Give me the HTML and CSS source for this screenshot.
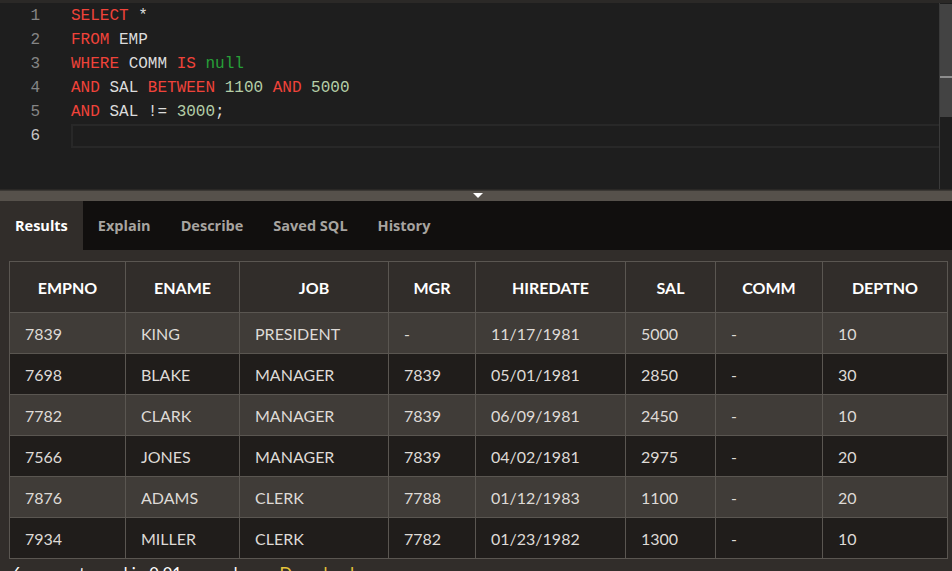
FILE: index.html
```html
<!DOCTYPE html>
<html>
<head>
<meta charset="utf-8">
<link rel="stylesheet" href="styles.css">
</head>
<body>
<div class="topstrip"></div>
<div class="editor">
  <div class="gutter">
    <div class="ln">1</div><div class="ln">2</div><div class="ln">3</div><div class="ln">4</div><div class="ln">5</div><div class="ln cur">6</div>
  </div>
  <div class="code">
    <div class="line"><span class="kw">SELECT</span> <span class="id">*</span></div>
    <div class="line"><span class="kw">FROM</span> <span class="id">EMP</span></div>
    <div class="line"><span class="kw">WHERE</span> <span class="id">COMM</span> <span class="kw">IS</span> <span class="nl">null</span></div>
    <div class="line"><span class="kw">AND</span> <span class="id">SAL</span> <span class="kw">BETWEEN</span> <span class="num">1100</span> <span class="kw">AND</span> <span class="num">5000</span></div>
    <div class="line"><span class="kw">AND</span> <span class="id">SAL</span> <span class="id">!=</span> <span class="num">3000</span><span class="id">;</span></div>
    <div class="line curline"></div>
  </div>
  <div class="vscroll"><div class="thumb"><div class="mark"></div></div></div>
</div>
<div class="splitter"><div class="tri"></div></div>
<div class="tabs">
  <div class="tab active">Results</div>
  <div class="tab">Explain</div>
  <div class="tab">Describe</div>
  <div class="tab">Saved SQL</div>
  <div class="tab">History</div>
</div>
<div class="results">
  <table class="grid">
    <colgroup>
      <col style="width:116px"><col style="width:114px"><col style="width:149px"><col style="width:87px"><col style="width:150px"><col style="width:90px"><col style="width:107px"><col style="width:125px">
    </colgroup>
    <thead>
      <tr><th>EMPNO</th><th>ENAME</th><th>JOB</th><th>MGR</th><th>HIREDATE</th><th>SAL</th><th>COMM</th><th>DEPTNO</th></tr>
    </thead>
    <tbody>
      <tr><td>7839</td><td>KING</td><td>PRESIDENT</td><td>-</td><td>11/17/1981</td><td>5000</td><td>-</td><td>10</td></tr>
      <tr><td>7698</td><td>BLAKE</td><td>MANAGER</td><td>7839</td><td>05/01/1981</td><td>2850</td><td>-</td><td>30</td></tr>
      <tr><td>7782</td><td>CLARK</td><td>MANAGER</td><td>7839</td><td>06/09/1981</td><td>2450</td><td>-</td><td>10</td></tr>
      <tr><td>7566</td><td>JONES</td><td>MANAGER</td><td>7839</td><td>04/02/1981</td><td>2975</td><td>-</td><td>20</td></tr>
      <tr><td>7876</td><td>ADAMS</td><td>CLERK</td><td>7788</td><td>01/12/1983</td><td>1100</td><td>-</td><td>20</td></tr>
      <tr><td>7934</td><td>MILLER</td><td>CLERK</td><td>7782</td><td>01/23/1982</td><td>1300</td><td>-</td><td>10</td></tr>
    </tbody>
  </table>
  <div class="status"><span>6 rows returned in 0.01 seconds</span><span class="dl">Download</span></div>
</div>
</body>
</html>
```
FILE: styles.css
```css
html, body {
  margin: 0;
  padding: 0;
  background: #312d2a;
  overflow: hidden;
  height: 571px;
}
body {
  font-family: Lato, "Open Sans", sans-serif;
}
.topstrip {
  height: 3px;
  background: #2b2927;
}
.editor {
  display: flex;
  height: 186px;
  overflow: hidden;
  background: #1e1e1e;
  border-bottom: 1px solid #2a2826;
}
.gutter {
  width: 40px;
  flex: none;
  padding: 1px 31px 0 0;
  font-family: "Liberation Mono", monospace;
  font-size: 16px;
  color: #858585;
  text-align: right;
}
.ln {
  height: 24px;
  line-height: 24px;
}
.ln.cur {
  color: #c6c6c6;
}
.code {
  flex: 1;
  padding-top: 1px;
  font-family: "Liberation Mono", monospace;
  font-size: 16px;
}
.line {
  height: 24px;
  line-height: 24px;
  white-space: pre;
}
.curline {
  box-sizing: border-box;
  border: 2px solid #282828;
  border-right: none;
}
.kw { color: #f0433a; }
.id { color: #dcdcdc; }
.nl { color: #27a038; }
.num { color: #b5cea8; }
.vscroll {
  width: 12px;
  flex: none;
  border-left: 1px solid #3a3a3a;
  background: #1e1e1e;
}
.thumb {
  height: 113px;
  margin-top: 1px;
  background: #434343;
  position: relative;
}
.mark {
  position: absolute;
  left: 0;
  right: 0;
  top: 72px;
  height: 2px;
  background: #8d8d8d;
}
.splitter {
  height: 10px;
  background: #56514b;
  border-top: 1px solid #3b3834;
  display: flex;
  justify-content: center;
  align-items: flex-start;
}
.tri {
  margin-top: 2px;
  margin-left: 4px;
  width: 0;
  height: 0;
  border-left: 5px solid transparent;
  border-right: 5px solid transparent;
  border-top: 5px solid #ffffff;
}
.tabs {
  display: flex;
  height: 49px;
  background: #110f0e;
}
.tab {
  padding: 0 15px;
  line-height: 50px;
  font-family: "Open Sans", sans-serif;
  font-weight: 700;
  font-size: 14.5px;
  color: #a7a4a0;
}
.tab.active {
  background: #312d2a;
  color: #ffffff;
}
.results {
  padding: 11px 5px 0 9px;
}
.grid {
  border-collapse: collapse;
  table-layout: fixed;
  width: 938px;
  font-size: 16px;
  border: 1px solid #5a5651;
}
.grid th {
  height: 50px;
  padding: 0;
  text-align: center;
  color: #ffffff;
  font-weight: 700;
  background: #312d2a;
  border: 1px solid #5a5651;
}
.grid td {
  height: 40px;
  padding: 0 0 0 15px;
  color: #dedad6;
  border: 1px solid #5a5651;
}
.grid tbody tr:nth-child(odd) td {
  background: #403c38;
}
.grid tbody tr:nth-child(even) td {
  background: #201d1b;
}
.status {
  display: flex;
  gap: 35px;
  padding: 5px 0 0 3px;
  font-size: 16.5px;
  color: #ffffff;
}
.dl {
  color: #e7c63a;
}
```
